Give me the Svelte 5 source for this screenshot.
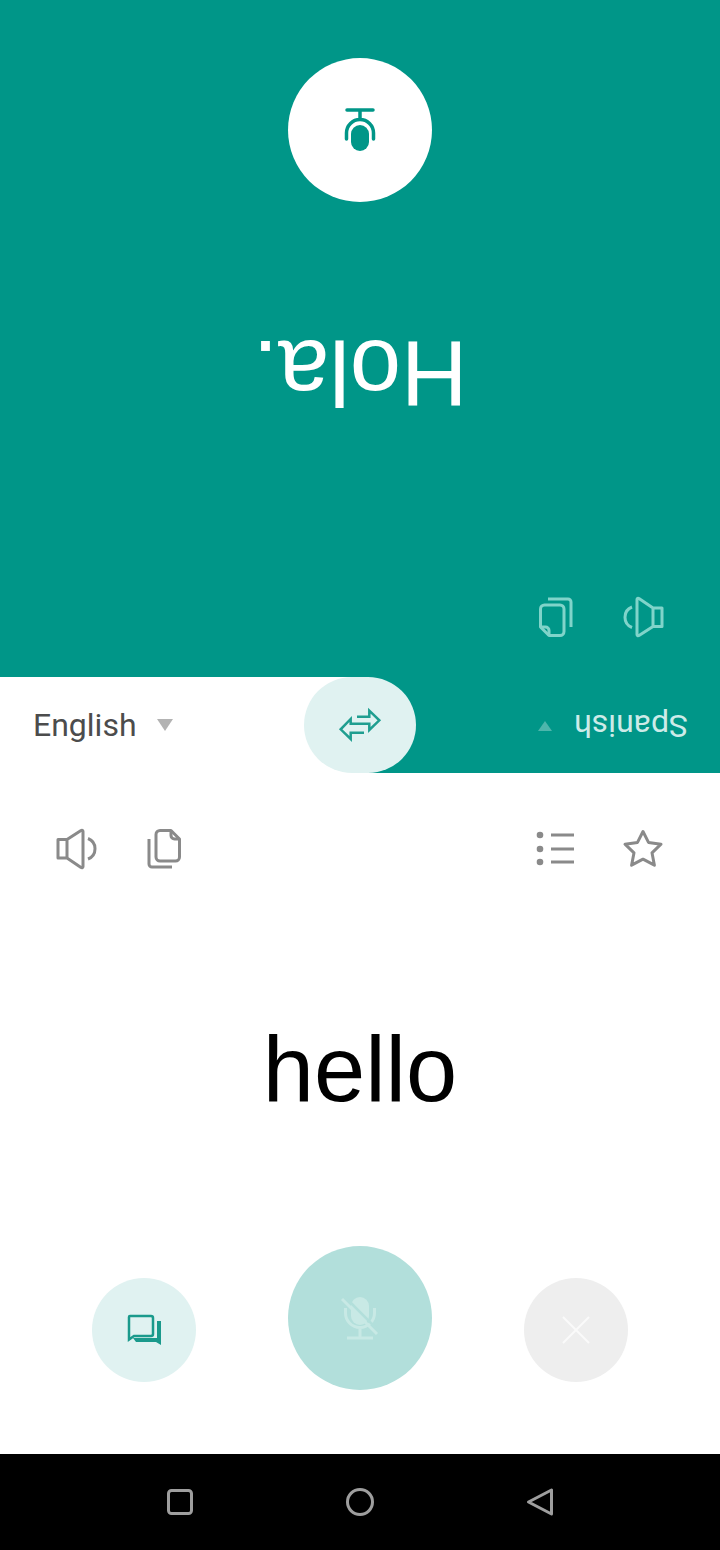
<script lang="ts">
  // same toolbar icons are used on both sides, the top side is just rotated
</script>

{#snippet speaker()}
  <svg class="icon" viewBox="0 0 44 44">
    <path d="M3 12.5H12L26 3.5C27 3 28 3.5 28 4.5V39.5C28 40.5 27 41 26 40.5L12 31H3Z M12 12.5V31" />
    <path d="M33 11.5A11 11 0 0 1 33 32" />
  </svg>
{/snippet}

{#snippet copy()}
  <svg class="icon" viewBox="0 0 44 44">
    <path d="M17 3.5H28L36.5 12V30A4 4 0 0 1 32.5 34H17A4 4 0 0 1 13 30V7.5A4 4 0 0 1 17 3.5Z" />
    <path d="M28 3.5V8.5A3.5 3.5 0 0 0 31.5 12H36.5" />
    <path d="M6 12V37A3 3 0 0 0 9 40H29" />
  </svg>
{/snippet}

<div class="screen">
  <section class="panel top">
    <div class="toolbar">
      <div class="group">
        {@render speaker()}
        {@render copy()}
      </div>
    </div>
    <div class="phrase">Hola.</div>
    <div class="actions">
      <button class="mic white" aria-label="Speak">
        <svg class="mic-icon" viewBox="0 0 40 48">
          <rect x="11" y="3" width="18" height="26" rx="9" fill="#009688" />
          <path d="M6.5 15V21A13.5 13.5 0 0 0 33.5 21V15M20 34.5V44M7 44H33" fill="none" stroke="#009688" stroke-width="3.5" stroke-linecap="round" />
        </svg>
      </button>
    </div>
  </section>

  <div class="langbar">
    <div class="lang">
      <span class="name">English</span>
      <span class="caret"></span>
    </div>
    <button class="swap" aria-label="Swap languages">
      <svg viewBox="0 0 60 50" width="60" height="50">
        <path d="M27 16.7H39.3V10.7L49.3 20.3L39.3 30V23.7H20.7V19L10.7 29.3L20.7 39V32.7H34" fill="none" stroke="#1f9e90" stroke-width="2.5" />
      </svg>
    </button>
    <div class="lang flipped">
      <span class="name">Spanish</span>
      <span class="caret"></span>
    </div>
  </div>

  <section class="panel bottom">
    <div class="toolbar">
      <div class="group">
        {@render speaker()}
        {@render copy()}
      </div>
      <div class="group">
        <svg class="icon" viewBox="0 0 44 44">
          <circle cx="7" cy="8" r="3.3" class="dot" />
          <circle cx="7" cy="22" r="3.3" class="dot" />
          <circle cx="7" cy="35" r="3.3" class="dot" />
          <path d="M18 8H41M18 22H41M18 35H41" />
        </svg>
        <svg class="icon" viewBox="0 0 44 44">
          <path d="M22 4.5L27.5 15.4L40 17.2L31 25.8L33.4 38.2L22 32.2L10.6 38.2L13 25.8L4 17.2L16.5 15.4Z" />
        </svg>
      </div>
    </div>
    <div class="phrase">hello</div>
    <div class="actions">
      <button class="side chat" aria-label="Conversation">
        <svg viewBox="0 0 44 44" width="44" height="44">
          <path d="M8 8H29A2 2 0 0 1 31 10V26A2 2 0 0 1 29 28H12L7 31.5V9A1 1 0 0 1 8 8Z" fill="none" stroke="#1a9a8c" stroke-width="2.5" />
          <path d="M11 30H35V13H39V37L34 34H14Z" fill="#1a9a8c" />
        </svg>
      </button>
      <button class="mic muted" aria-label="Microphone off">
        <svg class="mic-icon" viewBox="0 0 40 48">
          <rect x="11" y="3" width="18" height="28" rx="9" fill="#c8e9e5" />
          <path d="M5.5 14V19A14.5 14.5 0 0 0 34.5 19V14M20 33.5V44M7 44H33" fill="none" stroke="#c8e9e5" stroke-width="3" />
          <path d="M5 3L40 38" fill="none" stroke="#b2dfdb" stroke-width="2.5" />
          <path d="M2 5L37 40" fill="none" stroke="#c8e9e5" stroke-width="3" />
        </svg>
      </button>
      <button class="side clear" aria-label="Clear">
        <svg viewBox="0 0 32 32" width="32" height="32">
          <path d="M3 3L29 29M29 3L3 29" fill="none" stroke="#fafafa" stroke-width="2" />
        </svg>
      </button>
    </div>
  </section>

  <nav class="sysnav">
    <svg viewBox="0 0 30 30" width="30" height="30"><rect x="3.5" y="3.5" width="23" height="23" rx="3" /></svg>
    <svg viewBox="0 0 30 30" width="30" height="30"><circle cx="15" cy="15" r="12.5" /></svg>
    <svg viewBox="0 0 30 30" width="30" height="30"><path d="M3.5 15L26.5 3V27Z" /></svg>
  </nav>
</div>

<style>
  :global(body) {
    margin: 0;
    background: #fff;
  }
  .screen {
    width: 720px;
    height: 1550px;
    display: flex;
    flex-direction: column;
    font-family: Roboto, "Liberation Sans", sans-serif;
    overflow: hidden;
  }
  button {
    border: 0;
    padding: 0;
    display: flex;
    align-items: center;
    justify-content: center;
    flex: none;
  }
  .panel {
    display: flex;
    flex-direction: column;
  }
  .top {
    height: 677px;
    background: #009688;
    color: #fff;
    transform: rotate(180deg);
  }
  .bottom {
    height: 681px;
    background: #fff;
    color: #000;
  }
  .toolbar {
    display: flex;
    justify-content: space-between;
    padding: 54px 55px 0;
  }
  .top .toolbar {
    padding-top: 38px;
  }
  .group {
    display: flex;
    gap: 44px;
  }
  .icon {
    width: 44px;
    height: 44px;
    fill: none;
    stroke: #8a8a8a;
    stroke-width: 3;
    stroke-linejoin: round;
  }
  .top .icon {
    stroke: #80d4ca;
  }
  .dot {
    fill: #8a8a8a;
    stroke: none;
  }
  .phrase {
    flex: 1;
    display: flex;
    align-items: center;
    justify-content: center;
    font-family: "Liberation Sans", Arial, sans-serif;
    font-size: 92px;
    line-height: 1;
    padding-top: 20px;
  }
  .top .phrase {
    padding-top: 50px;
  }
  .actions {
    display: flex;
    justify-content: center;
    align-items: flex-end;
    gap: 92px;
    padding-bottom: 64px;
  }
  .top .actions {
    padding-bottom: 58px;
  }
  .mic {
    width: 144px;
    height: 144px;
    border-radius: 50%;
  }
  .mic-icon {
    width: 40px;
    height: 48px;
  }
  .white {
    background: #fff;
  }
  .muted {
    background: #b2dfdb;
  }
  .side {
    width: 104px;
    height: 104px;
    border-radius: 50%;
    margin-bottom: 8px;
  }
  .chat {
    background: #e0f2f1;
  }
  .clear {
    background: #eeeeee;
  }
  .langbar {
    height: 96px;
    display: flex;
    background: linear-gradient(90deg, #fff 50%, #009688 50%);
  }
  .lang {
    width: 304px;
    box-sizing: border-box;
    flex: none;
    display: flex;
    align-items: center;
    gap: 20px;
    padding-left: 33px;
    font-size: 32px;
    color: #4c4c4c;
  }
  .caret {
    width: 0;
    height: 0;
    border-left: 8px solid transparent;
    border-right: 8px solid transparent;
    border-top: 12px solid #b3b3b3;
  }
  .flipped {
    transform: rotate(180deg);
    color: #cdebe8;
    gap: 22px;
    padding-left: 32px;
    padding-bottom: 2px;
  }
  .flipped .caret {
    border-left-width: 7px;
    border-right-width: 7px;
    border-top: 10px solid #4db6ac;
  }
  .swap {
    width: 112px;
    height: 96px;
    border-radius: 48px;
    background: #e0f2f1;
  }
  .sysnav {
    flex: 1;
    background: #000;
    display: flex;
    justify-content: center;
    align-items: center;
    gap: 150px;
  }
  .sysnav svg {
    fill: none;
    stroke: #9e9e9e;
    stroke-width: 3;
    stroke-linejoin: round;
  }
</style>
